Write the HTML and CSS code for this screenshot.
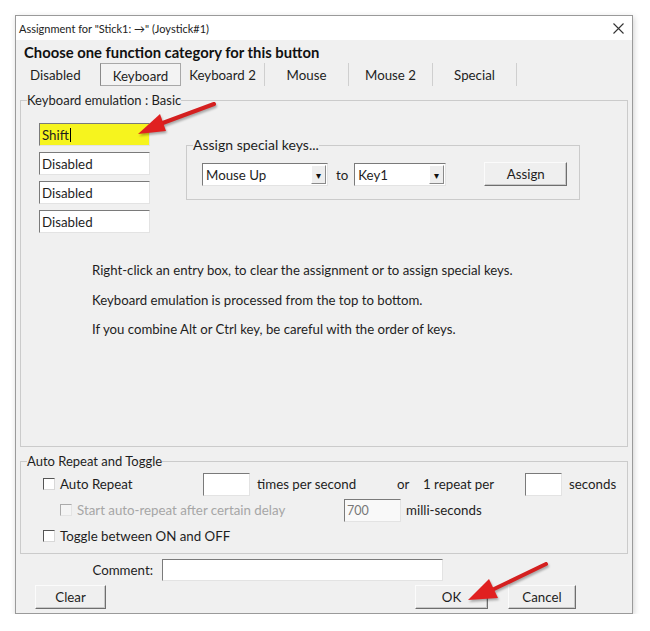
FILE: index.html
```html
<!DOCTYPE html>
<html lang="en">
<head>
<meta charset="UTF-8" />
<meta name="viewport" content="width=device-width, initial-scale=1" />
<title>Assignment</title>
<link rel="stylesheet" href="styles.css">
</head>
<body>
  <div class="window">
    <div class="titlebar">
      <span class="title">Assignment for "Stick1: →" (Joystick#1)</span>
      <svg class="close" width="11" height="11" viewBox="0 0 11 11"><path d="M0.5 0.5L10.5 10.5M10.5 0.5L0.5 10.5" stroke="#333" stroke-width="1.1" fill="none"/></svg>
    </div>
    <div class="body">
      <h1>Choose one function category for this button</h1>
      <div class="tabs">
        <div class="tab first">Disabled</div>
        <div class="tab active">Keyboard</div>
        <div class="tab sep">Keyboard 2</div>
        <div class="tab sep">Mouse</div>
        <div class="tab sep">Mouse 2</div>
        <div class="tab sep">Special</div>
      </div>

      <fieldset class="group main">
        <legend>Keyboard emulation : Basic</legend>
        <div class="kb-row">
          <div class="entries">
            <div class="entry hl">Shift<span class="caret"></span></div>
            <div class="entry">Disabled</div>
            <div class="entry">Disabled</div>
            <div class="entry">Disabled</div>
          </div>
          <fieldset class="group special">
            <legend>Assign special keys...</legend>
            <div class="special-row">
              <div class="select wide"><span>Mouse Up</span><span class="drop">▾</span></div>
              <span class="to">to</span>
              <div class="select narrow"><span>Key1</span><span class="drop">▾</span></div>
              <button class="btn assign">Assign</button>
            </div>
          </fieldset>
        </div>
        <div class="help">
          <p>Right-click an entry box, to clear the assignment or to assign special keys.</p>
          <p>Keyboard emulation is processed from the top to bottom.</p>
          <p>If you combine Alt or Ctrl key, be careful with the order of keys.</p>
        </div>
      </fieldset>

      <fieldset class="group repeat">
        <legend>Auto Repeat and Toggle</legend>
        <div class="row r1">
          <span class="cb"></span>
          <span class="lbl w-auto">Auto Repeat</span>
          <span class="field f-times"></span>
          <span class="lbl w-times">times per second</span>
          <span class="lbl w-or">or</span>
          <span class="lbl w-per">1 repeat per</span>
          <span class="field f-secs"></span>
          <span class="lbl">seconds</span>
        </div>
        <div class="row r2">
          <span class="cb off"></span>
          <span class="lbl w-delay off-text">Start auto-repeat after certain delay</span>
          <span class="field f-ms">700</span>
          <span class="lbl">milli-seconds</span>
        </div>
        <div class="row r3">
          <span class="cb"></span>
          <span class="lbl">Toggle between ON and OFF</span>
        </div>
      </fieldset>

      <div class="comment-row">
        <label class="comment-lbl">Comment:</label>
        <span class="field f-comment"></span>
      </div>
      <div class="button-row">
        <button class="btn clear">Clear</button>
        <button class="btn ok">OK</button>
        <button class="btn cancel">Cancel</button>
      </div>
    </div>
  </div>

  <!-- annotation arrows drawn over the screenshot -->
  <svg class="arrow a1" width="90" height="40" viewBox="0 0 90 40">
    <path d="M84 4 L30 24" stroke="#d42020" stroke-width="4" stroke-linecap="round" fill="none"/>
    <path d="M8 34 L30 14 L36 31 Z" fill="#e02020"/>
  </svg>
  <svg class="arrow a2" width="90" height="45" viewBox="0 0 90 45">
    <path d="M84 4 L30 30" stroke="#d42020" stroke-width="4" stroke-linecap="round" fill="none"/>
    <path d="M6 40 L27 19 L36 38 Z" fill="#e02020"/>
  </svg>
</body>
</html>
```

FILE: styles.css
```css
/* dialog look */
body { margin: 0; background: #fff; font-family: Lato, "Liberation Sans", sans-serif; font-size: 13px; color: #1e1e1e; position: relative; }
.window { margin: 15px 0 0 15px; width: 618px; height: 599px; box-sizing: border-box; border: 1px solid #9a9a9a; box-shadow: 1px 2px 6px rgba(0,0,0,0.18); display: flex; flex-direction: column; }
.titlebar { height: 24px; background: #fff; display: flex; align-items: center; justify-content: space-between; padding: 0 8px 0 3px; }
.title { font-size: 11px; color: #222; }
.body { flex: 1; background: #f0f0f0; display: flex; flex-direction: column; }
h1 { margin: 3px 0 0 8px; font-size: 14.8px; font-weight: bold; line-height: 18px; color: #111; }

.tabs { display: flex; height: 23px; margin-top: 2px; }
.tab { width: 84px; box-sizing: border-box; display: flex; align-items: center; justify-content: center; font-size: 13.3px; }
.tab.first { justify-content: flex-start; padding-left: 14px; }
.tab.active { width: 81px; border: 1px solid #a8a8a8; border-left-color: #8a8a8a; padding-top: 3px; background: #f3f3f3; }
.tab.sep { border-right: 1px solid #cfcfcf; }

.group { margin: 0 4px; padding: 0; border: 1px solid #cbcbcb; box-sizing: border-box; min-width: 0; }
.group legend { padding: 0; margin-left: 6px; line-height: 16px; font-size: 13px; }
.main { margin-top: 6px; height: 355px; }
.repeat { margin-top: 6px; height: 101px; }

.kb-row { display: flex; }
.entries { margin: 15px 0 0 18px; display: flex; flex-direction: column; gap: 6px; }
.entry { width: 111px; height: 23px; box-sizing: border-box; background: #fff; border: 1px solid; border-color: #7a7a7a #e3e3e3 #e3e3e3 #7a7a7a; padding: 0 2px; display: flex; align-items: center; font-size: 13.3px; }
.entry.hl { background: #f6f41e; }
.caret { width: 1px; height: 14px; background: #000; margin-left: 1px; }

.special { margin: 29px 0 0 36px; width: 394px; height: 63px; }
.special legend { font-size: 14px; margin-left: 6px; }
.special-row { display: flex; align-items: center; margin: 10px 0 0 15px; }
.select { height: 23px; box-sizing: border-box; background: #fff; border: 1px solid; border-color: #7a7a7a #e3e3e3 #e3e3e3 #7a7a7a; display: flex; align-items: center; justify-content: space-between; padding-left: 3px; font-size: 13.3px; }
.select.wide { width: 126px; }
.select.narrow { width: 92px; }
.drop { width: 15px; height: 19px; box-sizing: border-box; background: #eee; border: 1px solid; border-color: #fff #8a8a8a #8a8a8a #fff; margin-right: 1px; display: flex; align-items: center; justify-content: center; font-size: 10px; color: #111; }
.to { margin: 0 6px 0 8px; font-size: 13.3px; }
.btn { font-family: Lato, "Liberation Sans", sans-serif; font-size: 13.3px; color: #1e1e1e; background: #efefef; border: 1px solid; border-color: #fbfbfb #6e6e6e #6e6e6e #fbfbfb; box-shadow: inset -1px -1px 0 #c8c8c8; padding: 0; height: 24px; }
.assign { width: 83px; margin-left: 38px; margin-top: -2px; }

.help { margin: 23px 0 0 71px; }
.help p { margin: 0; line-height: 29.5px; font-size: 13.2px; }

.row { display: flex; align-items: center; height: 26px; }
.r1 { margin-top: 2px; padding-left: 22px; }
.r2 { padding-left: 39px; }
.r3 { padding-left: 22px; }
.cb { width: 12px; height: 12px; box-sizing: border-box; background: #fff; border: 1px solid; border-color: #555 #d8d8d8 #d8d8d8 #555; margin-right: 5px; }
.cb.off { border-color: #aaa #e4e4e4 #e4e4e4 #aaa; background: #f4f4f4; }
.lbl { font-size: 13.3px; white-space: nowrap; }
.off-text { color: #a6a6a6; }
.w-auto { width: 143px; }
.w-times { width: 140px; margin-left: 7px; }
.w-or { width: 26px; }
.w-per { width: 102px; }
.w-delay { width: 267px; }
.field { height: 23px; box-sizing: border-box; background: #fff; border: 1px solid; border-color: #7a7a7a #e3e3e3 #e3e3e3 #7a7a7a; display: flex; align-items: center; padding-left: 2px; }
.f-times { width: 47px; }
.f-secs { width: 37px; margin-right: 7px; }
.f-ms { width: 57px; margin-right: 5px; font-size: 12.5px; color: #777; background: #f9f9f9; }

.comment-row { display: flex; align-items: center; margin-top: 5px; }
.comment-lbl { width: 137px; text-align: right; font-size: 13.3px; margin-right: 9px; }
.f-comment { width: 281px; height: 22px; }
.button-row { display: flex; margin-top: 4px; padding-left: 19px; }
.clear { width: 71px; }
.ok { width: 73px; margin-left: 309px; }
.cancel { width: 68px; margin-left: 20px; }

.arrow { position: absolute; filter: drop-shadow(1px 2px 1px rgba(0,0,0,0.3)); }
.a1 { left: 130px; top: 100px; }
.a2 { left: 462px; top: 560px; }
```
